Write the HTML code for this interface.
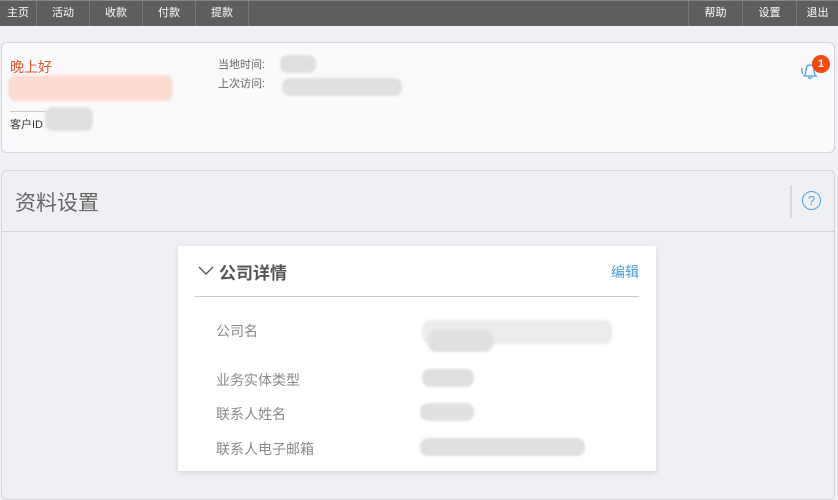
<!DOCTYPE html>
<html><head><meta charset="utf-8"><style>
*{margin:0;padding:0;box-sizing:border-box}
body{width:838px;height:487px;overflow:hidden;background:#f0f1f5;font-family:"Liberation Sans","Noto Sans CJK SC",sans-serif;position:relative;color:#555}
.nav{position:absolute;left:0;top:0;width:838px;height:26px;background:#5e5e5e;border-top:1px solid #888}
.nav span{position:absolute;top:0;height:25px;line-height:25px;font-size:11px;color:#fff;text-align:center;border-right:1px solid #777}
.nav span.r{border-right:none;border-left:1px solid #777}
.card{position:absolute;left:1px;top:42px;width:834px;height:111px;background:#fafafc;border:1px solid #d6d6da;border-radius:6px}
.blur{position:absolute;background:#e0e0e3;border-radius:8px;filter:blur(1px)}
.panel{position:absolute;left:1px;top:170px;width:834px;height:330px;background:#eff0f4;border:1px solid #d6d6da;border-radius:6px}
.inner{position:absolute;left:178px;top:246px;width:478px;height:225px;background:#fff;box-shadow:0 2px 6px rgba(0,0,0,.12)}
.lbl{position:absolute;left:38px;font-size:14px;color:#888}
</style></head><body>
<div class="nav">
<span style="left:0;width:37px">主页</span>
<span style="left:37px;width:53px">活动</span>
<span style="left:90px;width:53px">收款</span>
<span style="left:143px;width:53px">付款</span>
<span style="left:196px;width:53px">提款</span>
<span class="r" style="left:688px;width:54px">帮助</span>
<span class="r" style="left:742px;width:54px">设置</span>
<span class="r" style="left:796px;width:42px">退出</span>
</div>
<div class="card">
<div style="position:absolute;left:8px;top:14px;font-size:14px;color:#f0502a">晚上好</div>
<div class="blur" style="left:6px;top:32px;width:165px;height:26px;background:#fcdcd2"></div>
<div style="position:absolute;left:8px;top:68px;width:36px;border-top:1px solid #ccc"></div>
<div style="position:absolute;left:8px;top:73px;font-size:11px;color:#333">客户ID</div>
<div class="blur" style="left:43px;top:64px;width:48px;height:24px"></div>
<div style="position:absolute;left:216px;top:13px;font-size:11px;color:#666;line-height:19px">当地时间:<br>上次访问:</div>
<div class="blur" style="left:278px;top:12px;width:36px;height:18px"></div>
<div class="blur" style="left:280px;top:35px;width:120px;height:18px"></div>
<svg style="position:absolute;left:796px;top:16px" width="24" height="24" viewBox="0 0 24 24" fill="none" stroke="#4aa3e0" stroke-width="1.3"><path d="M6 17 Q8 15 8 11 Q8 6 12 6 Q16 6 16 11 Q16 15 18 17 Z"/><path d="M10 18 Q12 21 14 18"/><path d="M4 9 Q3 12 5 15"/></svg>
<div style="position:absolute;left:810px;top:12px;width:18px;height:18px;border-radius:50%;background:#f24a10;color:#fff;font-size:11px;font-weight:bold;text-align:center;line-height:18px">1</div>
</div>
<div class="panel">
<div style="position:absolute;left:13px;top:16px;font-size:21px;color:#666">资料设置</div>
<div style="position:absolute;left:788px;top:14px;height:33px;border-left:2px solid #d8d8dc"></div>
<div style="position:absolute;left:800px;top:20px;width:19px;height:19px;border:1.3px solid #4aa3e0;border-radius:50%;color:#4aa3e0;font-size:13px;text-align:center;line-height:17px">?</div>
<div style="position:absolute;left:0;top:60px;width:832px;border-top:1px solid #d6d6da"></div>
</div>
<div class="inner">
<svg style="position:absolute;left:20px;top:18px" width="16" height="12" viewBox="0 0 16 12"><path d="M1 3 L8 10 L15 3" fill="none" stroke="#555" stroke-width="1.4"/></svg>
<div style="position:absolute;left:41px;top:13px;font-size:17px;font-weight:bold;color:#555">公司详情</div>
<div style="position:absolute;left:433px;top:16px;font-size:14px;color:#4a9ad8">编辑</div>
<div style="position:absolute;left:16px;top:50px;width:445px;border-top:1px solid #ccc"></div>
<div class="lbl" style="top:75px">公司名</div>
<div class="lbl" style="top:124px">业务实体类型</div>
<div class="lbl" style="top:158px">联系人姓名</div>
<div class="lbl" style="top:193px">联系人电子邮箱</div>
<div class="blur" style="left:244px;top:74px;width:190px;height:24px;background:#ececee"></div>
<div class="blur" style="left:250px;top:84px;width:65px;height:22px"></div>
<div class="blur" style="left:244px;top:123px;width:52px;height:18px"></div>
<div class="blur" style="left:242px;top:157px;width:54px;height:18px"></div>
<div class="blur" style="left:242px;top:192px;width:165px;height:18px"></div>
</div>
</body></html>
